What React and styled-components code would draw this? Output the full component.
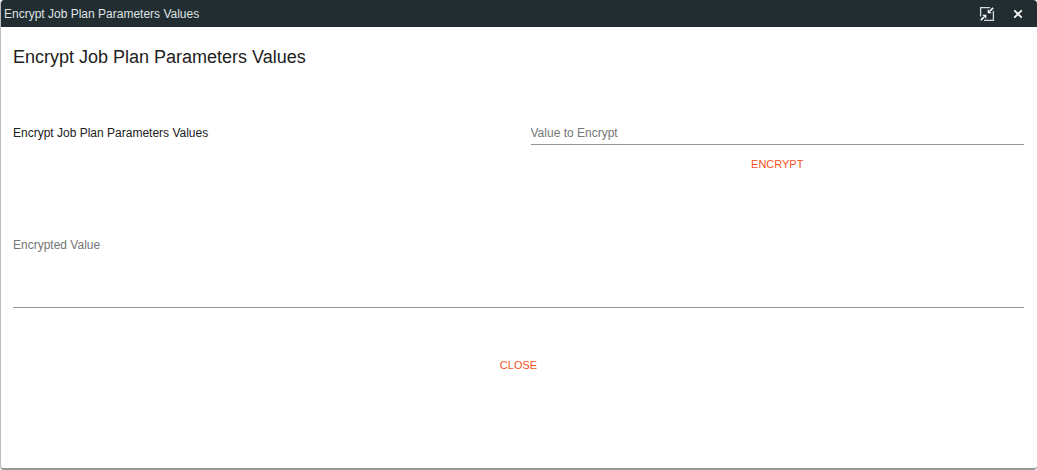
import React, { useState } from "react";
import styled, { createGlobalStyle } from "styled-components";

const GlobalStyle = createGlobalStyle`
  *, *::before, *::after { box-sizing: border-box; }
  body {
    margin: 0;
    background: #fff;
    color: #212121;
    font: 12px/16px "Liberation Sans", Arial, sans-serif;
  }
`;

const Dialog = styled.section`
  display: flex;
  flex-direction: column;
  min-height: 100vh;
  background: #fff;
  border-left: 1px solid #bdbdbd;
  border-bottom: 2px solid #979797;
  border-radius: 4px;
  overflow: hidden;
`;

const TitleBar = styled.header`
  display: flex;
  align-items: center;
  justify-content: space-between;
  height: 27px;
  padding: 0 8px 0 3px;
  background: #222d32;
  color: #dfe3e4;
`;

const WindowControls = styled.div`
  display: flex;
  align-items: center;
  gap: 9px;
`;

const IconButton = styled.button`
  display: grid;
  place-items: center;
  width: 22px;
  height: 22px;
  padding: 0;
  border: 0;
  background: none;
  color: #fff;
  cursor: pointer;
`;

const Form = styled.form`
  display: flex;
  flex-direction: column;
  padding: 18px 13px 0 12px;
`;

const Heading = styled.h1`
  margin: 0;
  font-size: 18px;
  line-height: 24px;
  font-weight: 400;
`;

const Columns = styled.div`
  display: grid;
  grid-template-columns: 1fr 1fr;
  column-gap: 24px;
  margin-top: 56px;
`;

const FieldColumn = styled.div`
  display: flex;
  flex-direction: column;
  align-items: center;
`;

const FieldLabel = styled.label`
  align-self: start;
`;

const TextInput = styled.input`
  width: 100%;
  height: 20px;
  padding: 0 0 4px;
  border: 0;
  border-bottom: 1px solid #949494;
  border-radius: 0;
  outline: 0;
  background: none;
  color: inherit;
  font: inherit;
  &::placeholder { color: #757575; opacity: 1; }
`;

const TextArea = styled.textarea`
  display: block;
  width: 100%;
  height: 71px;
  margin-top: 54px;
  padding: 0;
  border: 0;
  border-bottom: 1px solid #949494;
  border-radius: 0;
  outline: 0;
  resize: none;
  background: none;
  color: inherit;
  font: inherit;
  &::placeholder { color: #757575; opacity: 1; }
`;

const TextButton = styled.button`
  height: 38px;
  padding: 0 16px;
  border: 0;
  background: none;
  color: #f4511e;
  font: inherit;
  font-size: 11px;
  text-transform: uppercase;
  cursor: pointer;
`;

const Actions = styled.footer`
  display: flex;
  justify-content: center;
  margin-top: 38px;
`;

const RestoreIcon = () => (
  <svg width="16" height="16" viewBox="0 0 16 16" fill="none" aria-hidden="true">
    <path d="M11 1.6H1.6V10.5M5 14.4H14.4V5" stroke="#d5d9da" strokeWidth="1.3" />
    <path d="M14.2 1.8L11 5M1.8 14.2L5 11" stroke="#fff" strokeWidth="1.7" />
    <path d="M8.7 3.2V7.3H12.8L11.4 5.9L10.1 4.6ZM7.3 12.8V8.7H3.2L4.6 10.1L5.9 11.4Z" fill="#fff" />
  </svg>
);

const CloseIcon = () => (
  <svg width="10" height="10" viewBox="0 0 10 10" aria-hidden="true">
    <path d="M1.3 1.3L8.7 8.7M8.7 1.3L1.3 8.7" stroke="#fff" strokeWidth="1.8" />
  </svg>
);

export default function App() {
  const [value, setValue] = useState("");
  return (
    <>
      <GlobalStyle />
      <Dialog role="dialog" aria-labelledby="dialog-title">
        <TitleBar>
          <span id="dialog-title">Encrypt Job Plan Parameters Values</span>
          <WindowControls>
            <IconButton type="button" aria-label="Restore"><RestoreIcon /></IconButton>
            <IconButton type="button" aria-label="Close window"><CloseIcon /></IconButton>
          </WindowControls>
        </TitleBar>
        <Form onSubmit={(e) => e.preventDefault()}>
          <Heading>Encrypt Job Plan Parameters Values</Heading>
          <Columns>
            <FieldLabel htmlFor="plain-value">Encrypt Job Plan Parameters Values</FieldLabel>
            <FieldColumn>
              <TextInput
                id="plain-value"
                placeholder="Value to Encrypt"
                value={value}
                onChange={(e) => setValue(e.target.value)}
              />
              <TextButton type="submit">Encrypt</TextButton>
            </FieldColumn>
          </Columns>
          <TextArea aria-label="Encrypted Value" placeholder="Encrypted Value" readOnly />
          <Actions>
            <TextButton type="button">Close</TextButton>
          </Actions>
        </Form>
      </Dialog>
    </>
  );
}
